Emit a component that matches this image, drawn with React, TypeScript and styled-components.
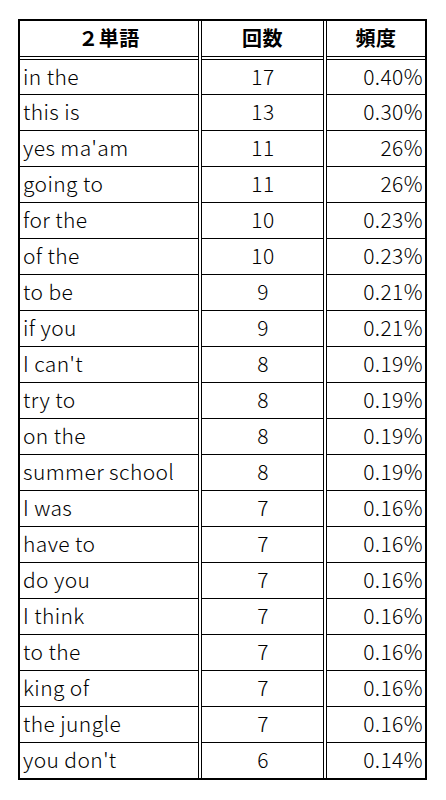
import React from 'react'
import styled, { createGlobalStyle } from 'styled-components'

const rows: [string, number, string][] = [
    ['in the', 17, '0.40%'],
    ['this is', 13, '0.30%'],
    ["yes ma'am", 11, '26%'],
    ['going to', 11, '26%'],
    ['for the', 10, '0.23%'],
    ['of the', 10, '0.23%'],
    ['to be', 9, '0.21%'],
    ['if you', 9, '0.21%'],
    ["I can't", 8, '0.19%'],
    ['try to', 8, '0.19%'],
    ['on the', 8, '0.19%'],
    ['summer school', 8, '0.19%'],
    ['I was', 7, '0.16%'],
    ['have to', 7, '0.16%'],
    ['do you', 7, '0.16%'],
    ['I think', 7, '0.16%'],
    ['to the', 7, '0.16%'],
    ['king of', 7, '0.16%'],
    ['the jungle', 7, '0.16%'],
    ["you don't", 6, '0.14%'],
]

const Global = createGlobalStyle`
    body{
        margin:0;
        background:#fff;
    }
`

export default function App() {
    return (
        <Page>
            <Global />
            <Sheet>
                <ColGap $col={2} />
                <ColGap $col={4} />

                <Head>２単語</Head>
                <Head>回数</Head>
                <Head>頻度</Head>

                <RowGap />
                <RowGap />
                <RowGap />

                {rows.map(([word, count, freq]) => (
                    <React.Fragment key={word}>
                        <Cell $align="left">{word}</Cell>
                        <Cell $align="center">{count}</Cell>
                        <Cell $align="right">{freq}</Cell>
                    </React.Fragment>
                ))}
            </Sheet>
        </Page>
    )
}

const Page = styled.div`
    padding:19px 0 0 18px;
    font-family:"Noto Sans CJK JP", "Noto Sans", sans-serif;
    color:#000;
`

// black background shows through the 1px gaps as grid lines
const Sheet = styled.div`
    display:grid;
    width:405px;
    grid-template-columns:178px 2px 121px 2px 98px;
    grid-template-rows:35px 2px 34px repeat(19, 35px);
    gap:1px;
    background:#000;
    border:2px solid #000;
`

const ColGap = styled.div<{ $col: number }>`
    grid-column:${p => p.$col};
    grid-row:1 / -1;
    background:#fff;
`

const RowGap = styled.div`
    background:#fff;
`

const Head = styled.div`
    display:flex;
    align-items:center;
    justify-content:center;
    padding-bottom:2px;
    background:#fff;
    font-size:20px;
    font-weight:700;
    letter-spacing:0.5px;
`

const Cell = styled.div<{ $align: 'left' | 'center' | 'right' }>`
    display:flex;
    align-items:center;
    justify-content:${p => p.$align === 'left' ? 'flex-start' : p.$align === 'right' ? 'flex-end' : 'center'};
    padding:0 2px 3px 3px;
    background:#fff;
    font-size:21px;
    font-weight:300;
    letter-spacing:0.4px;
    white-space:nowrap;
`
